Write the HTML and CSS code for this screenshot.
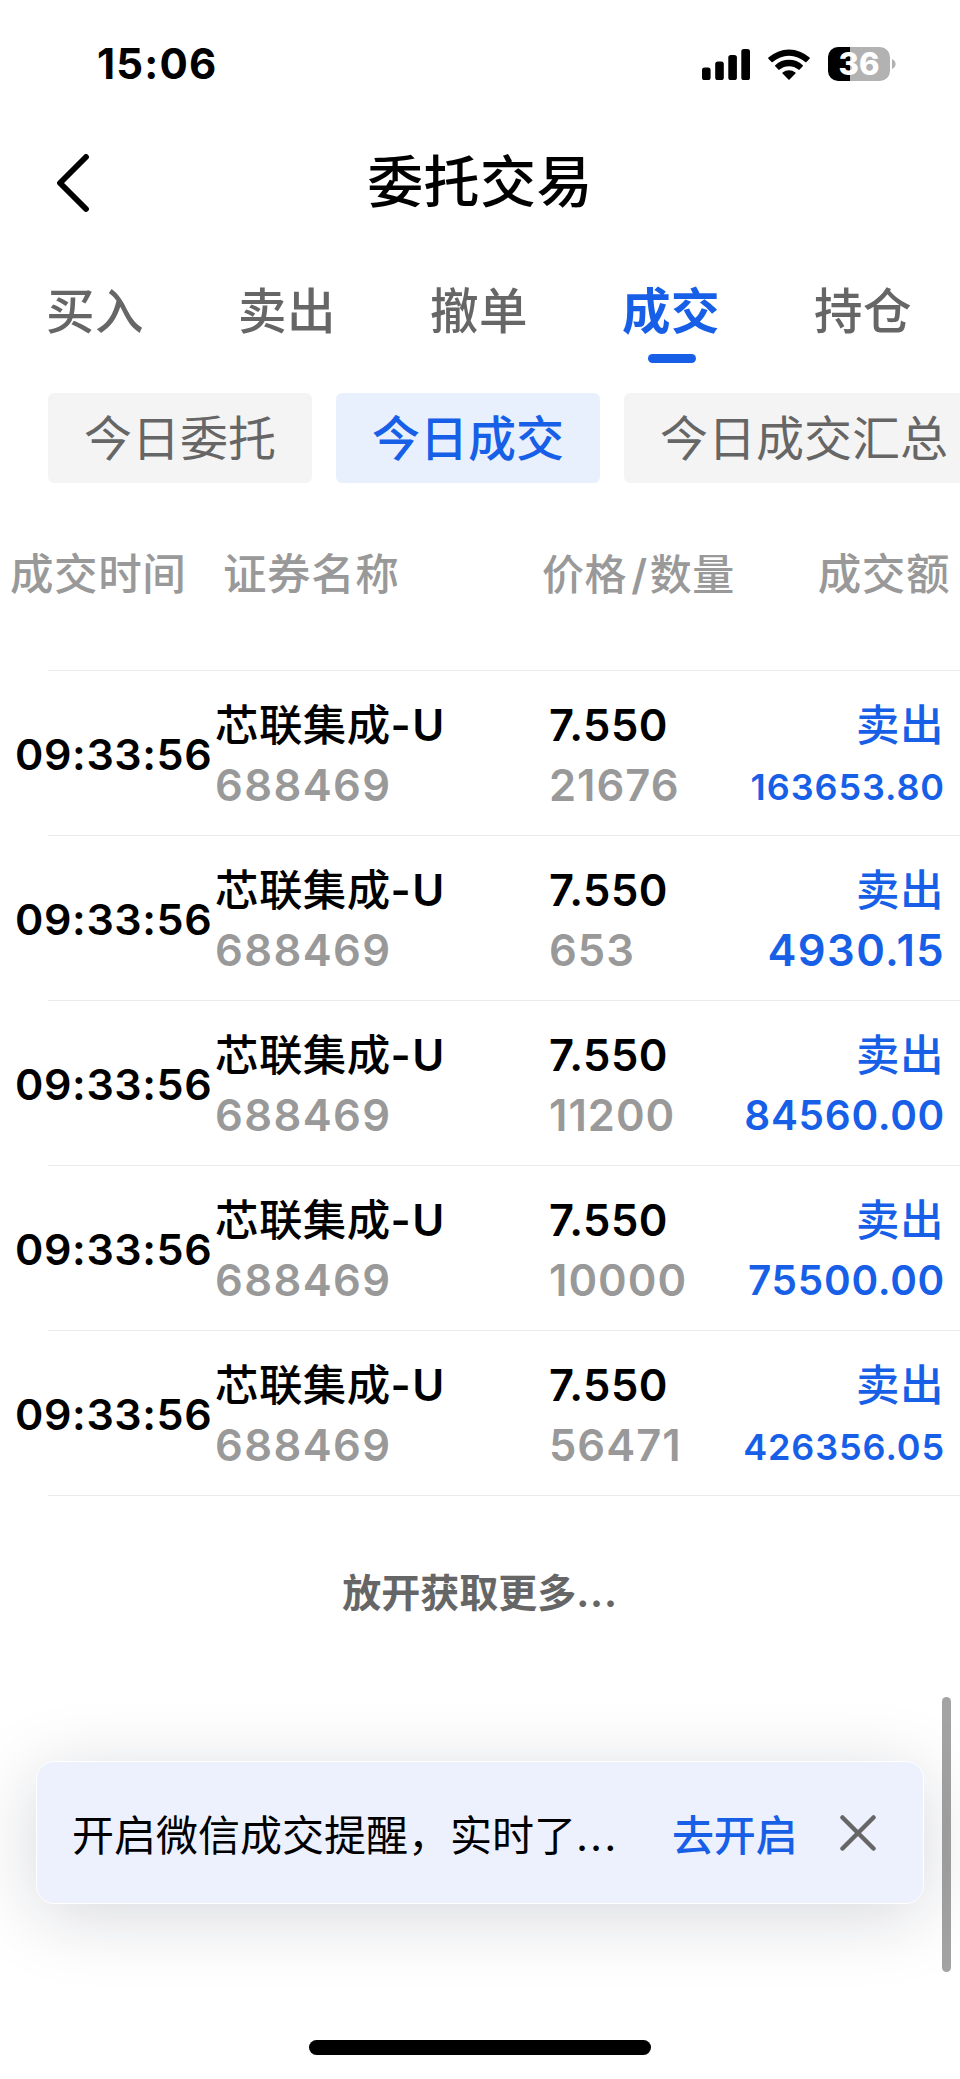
FILE: index.html
```html
<!DOCTYPE html>
<html lang="zh-CN">
<head>
<meta charset="utf-8">
<title>委托交易</title>
<link rel="stylesheet" href="styles.css">
</head>
<body>
<div class="screen">
  <header class="status">
    <span class="clock">15:06</span>
    <div class="indicators">
      <svg class="signal" viewBox="0 0 48 31"><rect x="0" y="18.5" width="8.6" height="12.5" rx="2.6"/><rect x="13.2" y="12.5" width="8.6" height="18.5" rx="2.6"/><rect x="26.3" y="6" width="8.6" height="25" rx="2.6"/><rect x="39.3" y="0" width="8.7" height="31" rx="2.6"/></svg>
      <svg class="wifi" viewBox="0 0 42 31"><path d="M.4 8.6A30.5 30.5 0 0 1 41.6 8.6Q42 9.2 41.6 9.7L38.4 13.1Q37.9 13.5 37.3 13A24.6 24.6 0 0 0 4.7 13Q4.1 13.5 3.6 13.1L.4 9.7Q0 9.2 .4 8.6Z"/><path d="M7.2 16.2A20.5 20.5 0 0 1 34.8 16.2Q35.2 16.7 34.8 17.2L31.4 20.7Q30.9 21.1 30.4 20.6A14.6 14.6 0 0 0 11.6 20.6Q11.1 21.1 10.6 20.7L7.2 17.2Q6.8 16.7 7.2 16.2Z"/><path d="M14.6 23.6A10 10 0 0 1 27.4 23.6Q27.8 24.1 27.4 24.6L21.6 30.6Q21 31.1 20.4 30.6L14.6 24.6Q14.2 24.1 14.6 23.6Z"/></svg>
      <div class="battery"><span class="level">36</span></div>
      <svg class="nub" viewBox="0 0 4 10"><path d="M0 0Q3.6 1.6 3.6 5Q3.6 8.4 0 10Z"/></svg>
    </div>
  </header>
  <div class="navbar">
    <svg class="back" viewBox="0 0 32 58"><path d="M29 3L3 29L29 55"/></svg>
    <h1 class="title">委托交易</h1>
  </div>
  <nav class="tabs">
    <span class="tab">买入</span><span class="tab">卖出</span><span class="tab">撤单</span><span class="tab active">成交</span><span class="tab">持仓</span>
  </nav>
  <div class="chips">
    <span class="chip">今日委托</span><span class="chip selected">今日成交</span><span class="chip">今日成交汇总</span>
  </div>
  <div class="columns">
    <span>成交时间</span><span>证券名称</span><span class="narrow">价格<i class="slash">/</i>数量</span><span class="last">成交额</span>
  </div>
  <div class="list">
    <div class="row"><span class="time">09:33:56</span><div class="cell name"><b>芯联集成<span class="latin">-U</span></b><small>688469</small></div><div class="cell price"><b>7.550</b><small>21676</small></div><div class="cell amount"><b>卖出</b><em class="s">163653.80</em></div></div>
    <div class="row"><span class="time">09:33:56</span><div class="cell name"><b>芯联集成<span class="latin">-U</span></b><small>688469</small></div><div class="cell price"><b>7.550</b><small>653</small></div><div class="cell amount"><b>卖出</b><em>4930.15</em></div></div>
    <div class="row"><span class="time">09:33:56</span><div class="cell name"><b>芯联集成<span class="latin">-U</span></b><small>688469</small></div><div class="cell price"><b>7.550</b><small>11200</small></div><div class="cell amount"><b>卖出</b><em class="m">84560.00</em></div></div>
    <div class="row"><span class="time">09:33:56</span><div class="cell name"><b>芯联集成<span class="latin">-U</span></b><small>688469</small></div><div class="cell price"><b>7.550</b><small>10000</small></div><div class="cell amount"><b>卖出</b><em class="m">75500.00</em></div></div>
    <div class="row"><span class="time">09:33:56</span><div class="cell name"><b>芯联集成<span class="latin">-U</span></b><small>688469</small></div><div class="cell price"><b>7.550</b><small>56471</small></div><div class="cell amount"><b>卖出</b><em class="s">426356.05</em></div></div>
  </div>
  <p class="more">放开获取更多<span class="dots">...</span></p>
  <aside class="notice">
    <span class="message">开启微信成交提醒，实时了<span class="dots">...</span></span>
    <span class="open">去开启</span>
    <svg class="close" viewBox="0 0 36 36"><path d="M2.5 2.5L33.5 33.5M33.5 2.5L2.5 33.5"/></svg>
  </aside>
  <div class="home"></div>
  <div class="scrollbar"></div>
</div>
</body>
</html>
```
FILE: styles.css
```css
* { box-sizing: border-box; }
body { margin: 0; background: #fff; }
.screen {
  position: relative;
  width: 960px;
  height: 2079px;
  overflow: hidden;
  display: flex;
  flex-direction: column;
  background: #fff;
  color: #000;
  font-family: Inter, "Noto Sans CJK SC", sans-serif;
}
svg { display: block; flex: none; }

.status {
  height: 128px;
  padding: 0 64px 0 97px;
  display: flex;
  align-items: center;
  justify-content: space-between;
}
.clock { font-size: 42px; font-weight: 750; line-height: 50px; letter-spacing: 1.2px; }
.indicators { display: flex; align-items: center; }
.signal { width: 48px; height: 31px; margin-right: 18px; }
.wifi { width: 42px; height: 31px; margin-right: 18px; }
.battery {
  width: 62px;
  height: 34px;
  border-radius: 10px;
  background: linear-gradient(90deg, #000 22px, #b2b2b2 22px);
  display: flex;
  align-items: center;
  justify-content: center;
}
.level { color: #fff; font-size: 31px; font-weight: 850; line-height: 34px; }
.nub { width: 4px; height: 10px; margin-left: 2px; fill: #b2b2b2; }

.navbar {
  height: 106px;
  padding: 0 57px;
  display: grid;
  grid-template-columns: 32px 1fr 32px;
  align-items: center;
}
.back { width: 32px; height: 58px; margin-top: 4px; fill: none; stroke: #000; stroke-width: 5.8; stroke-linecap: round; stroke-linejoin: round; }
.title { margin: 0; padding-top: 1px; text-align: center; font-size: 56px; line-height: 80px; font-weight: 500; letter-spacing: .4px; }

.tabs {
  height: 152px;
  margin-bottom: 7px;
  display: grid;
  grid-template-columns: repeat(5, 192px);
  grid-template-rows: 152px;
  font-size: 48.5px;
  font-weight: 500;
  line-height: 155px;
  letter-spacing: .4px;
  color: #666;
}
.tab { padding-left: 46px; }
.active { position: relative; color: #185fe8; font-weight: 700; }
.active::after {
  content: "";
  position: absolute;
  left: 72px;
  bottom: 23px;
  width: 48px;
  height: 9px;
  border-radius: 5px;
  background: #185fe8;
}

.chips { display: flex; gap: 24px; padding-left: 48px; }
.chip {
  flex: none;
  height: 90px;
  padding: 0 36px;
  border-radius: 6px;
  background: #f4f4f4;
  color: #666;
  font-size: 48px;
  line-height: 92px;
}
.selected { background: #e9f0fd; color: #185fe8; font-weight: 500; }

.columns {
  height: 187px;
  padding: 0 10px 11px;
  display: grid;
  grid-template-columns: 213px 319px 1fr auto;
  align-items: center;
  color: #999;
  font-size: 43.5px;
  font-weight: 500;
  letter-spacing: .6px;
}
.narrow { font-size: 42px; }
.slash { font-style: normal; font-weight: 600; padding: 0 2px 0 4px; }

.list { height: 826px; background: linear-gradient(#ebebeb, #ebebeb) no-repeat 48px 825px / 912px 1px; }
.row {
  height: 165px;
  padding: 1px 16px 0 0;
  display: grid;
  grid-template-columns: 215px 334px 1fr auto;
  align-items: center;
  background: linear-gradient(#ebebeb, #ebebeb) no-repeat 48px 0 / 912px 1px;
}
.time { padding: 2px 0 0 15px; font-size: 43px; font-weight: 560; letter-spacing: .6px; white-space: nowrap; }
.cell { display: flex; flex-direction: column; line-height: 60px; margin-top: 3px; }
.cell b, .cell small, .cell em { height: 60px; font-size: 43.5px; font-weight: 500; font-style: normal; white-space: nowrap; }
.name b { letter-spacing: .4px; }
.cell small { color: #999; font-weight: 560; letter-spacing: 1.4px; }
.cell .latin { font-weight: 560; letter-spacing: 1.5px; }
.price b { font-weight: 560; letter-spacing: .5px; }
.cell.price small { letter-spacing: 1px; }
.amount { text-align: right; color: #185fe8; }
.amount b { letter-spacing: .5px; }
.cell em { font-weight: 570; letter-spacing: 1.4px; margin-right: -1px; }
.cell .m { font-size: 40.5px; line-height: 62px; letter-spacing: .7px; }
.cell .s { font-size: 36px; line-height: 65px; letter-spacing: .9px; }

.more { margin: 0; height: 265px; text-align: center; font-size: 39px; font-weight: 700; line-height: 194px; color: #666; }
.more .dots { letter-spacing: .8px; }

.notice {
  width: 888px;
  height: 143px;
  margin-left: 36px;
  padding: 0 47px 0 35px;
  display: flex;
  align-items: center;
  border: 1px solid #fff;
  border-radius: 18px;
  background: #edf1fd;
  box-shadow: 0 12px 72px rgba(20, 25, 50, .17);
  font-size: 42px;
}
.message { width: 600px; white-space: nowrap; }
.message .dots { letter-spacing: 2px; }
.open { color: #185fe8; font-weight: 500; letter-spacing: -.3px; }
.close { width: 36px; height: 36px; margin-left: auto; fill: none; stroke: #666; stroke-width: 4.5; stroke-linecap: round; }
.home { width: 342px; height: 15px; margin: 136px auto 0; border-radius: 8px; background: #000; }
.scrollbar { position: absolute; left: 942px; top: 1697px; width: 9px; height: 275px; border-radius: 5px; background: rgba(0, 0, 0, .36); }
```
